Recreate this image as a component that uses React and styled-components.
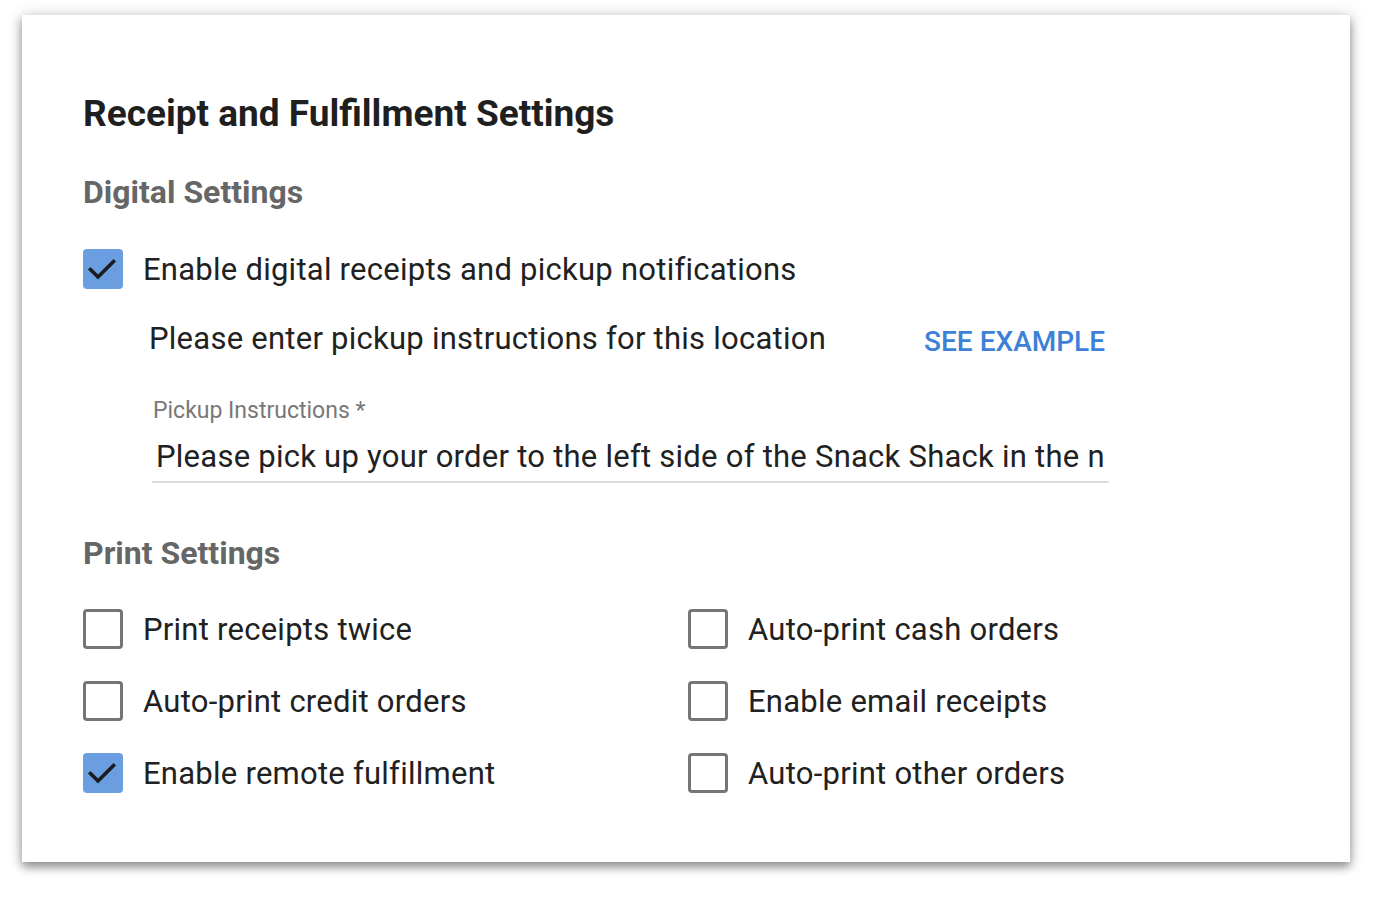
import React from "react";
import styled, { createGlobalStyle } from "styled-components";

const GlobalStyle = createGlobalStyle`
  html, body {
    margin: 0;
    padding: 0;
    background: #ffffff;
  }
  body {
    font-family: Roboto, "Liberation Sans", Arial, sans-serif;
    color: #212121;
  }
  * { box-sizing: border-box; }
`;

const Page = styled.div`
  padding: 15px 0 40px 22px;
`;

const Card = styled.section`
  width: 1328px;
  background: #ffffff;
  padding: 77px 61px 69px;
  box-shadow: 0 5px 9px rgba(0, 0, 0, 0.4), 0 0 16px rgba(0, 0, 0, 0.16);
`;

const Title = styled.h1`
  margin: 0;
  font-size: 37px;
  line-height: 44px;
  font-weight: 700;
  color: #1f1f1f;
`;

const SectionHeading = styled.h2`
  margin: ${(p) => p.$top}px 0 0;
  font-size: 32px;
  line-height: 38px;
  font-weight: 700;
  color: #666666;
`;

const CheckRow = styled.label`
  display: flex;
  align-items: center;
  gap: 20px;
  height: 40px;
  margin-top: ${(p) => p.$top || 0}px;
  font-size: 31px;
  line-height: 40px;
  letter-spacing: 0.25px;
  color: #212121;
`;

const CheckText = styled.span`
  padding-top: 2px;
`;

const Box = styled.span`
  flex: 0 0 40px;
  width: 40px;
  height: 40px;
  border-radius: 4px;
  display: flex;
  align-items: center;
  justify-content: center;
  background: ${(p) => (p.$checked ? "#6b9de1" : "#ffffff")};
  border: ${(p) => (p.$checked ? "none" : "3px solid #757575")};
`;

const Checkbox = ({ checked }) => (
  <Box $checked={checked}>
    {checked && (
      <svg width="40" height="40" viewBox="0 0 40 40">
        <path
          d="M7.5 20.5 L15 28 L30.5 12.5"
          fill="none"
          stroke="#1c1c1c"
          strokeWidth="3.6"
          strokeLinecap="square"
        />
      </svg>
    )}
  </Box>
);

const InstructionRow = styled.div`
  display: flex;
  justify-content: space-between;
  align-items: flex-start;
  width: 960px;
  height: 40px;
  margin: 30px 0 0 66px;
`;

const InstructionText = styled.p`
  margin: 0;
  font-size: 31px;
  line-height: 40px;
  letter-spacing: 0.25px;
  color: #212121;
`;

const LinkButton = styled.button`
  margin: 0 4px 0 0;
  padding: 5px 0 0;
  border: none;
  background: none;
  font-family: inherit;
  font-size: 28px;
  line-height: 35px;
  font-weight: 500;
  color: #3d80d8;
  cursor: pointer;
`;

const Field = styled.div`
  width: 957px;
  margin: 39px 0 0 69px;
`;

const FieldLabel = styled.label`
  display: block;
  padding-left: 1px;
  font-size: 23px;
  line-height: 26px;
  color: #787878;
`;

const FieldInput = styled.input`
  display: block;
  width: 100%;
  margin-top: 10px;
  padding: 2px 4px 5px 4px;
  height: 49px;
  border: none;
  border-bottom: 2px solid #dddddd;
  outline: none;
  background: transparent;
  font-family: inherit;
  font-size: 31px;
  line-height: 40px;
  letter-spacing: 0.25px;
  color: #212121;
`;

const PrintGrid = styled.div`
  display: grid;
  grid-template-columns: 605px 1fr;
  row-gap: 32px;
  margin-top: 37px;
`;

const printOptions = [
  { label: "Print receipts twice", checked: false },
  { label: "Auto-print cash orders", checked: false },
  { label: "Auto-print credit orders", checked: false },
  { label: "Enable email receipts", checked: false },
  { label: "Enable remote fulfillment", checked: true },
  { label: "Auto-print other orders", checked: false },
];

export default function App() {
  return (
    <>
      <GlobalStyle />
      <Page>
        <Card>
          <Title>Receipt and Fulfillment Settings</Title>

          <SectionHeading $top={37}>Digital Settings</SectionHeading>
          <CheckRow $top={38}>
            <Checkbox checked />
            <CheckText>Enable digital receipts and pickup notifications</CheckText>
          </CheckRow>

          <InstructionRow>
            <InstructionText>Please enter pickup instructions for this location</InstructionText>
            <LinkButton type="button">SEE EXAMPLE</LinkButton>
          </InstructionRow>

          <Field>
            <FieldLabel htmlFor="pickup">Pickup Instructions *</FieldLabel>
            <FieldInput
              id="pickup"
              readOnly
              defaultValue="Please pick up your order to the left side of the Snack Shack in the northeast corner of the lobby."
            />
          </Field>

          <SectionHeading $top={51}>Print Settings</SectionHeading>
          <PrintGrid>
            {printOptions.map((o) => (
              <CheckRow key={o.label}>
                <Checkbox checked={o.checked} />
                <CheckText>{o.label}</CheckText>
              </CheckRow>
            ))}
          </PrintGrid>
        </Card>
      </Page>
    </>
  );
}
